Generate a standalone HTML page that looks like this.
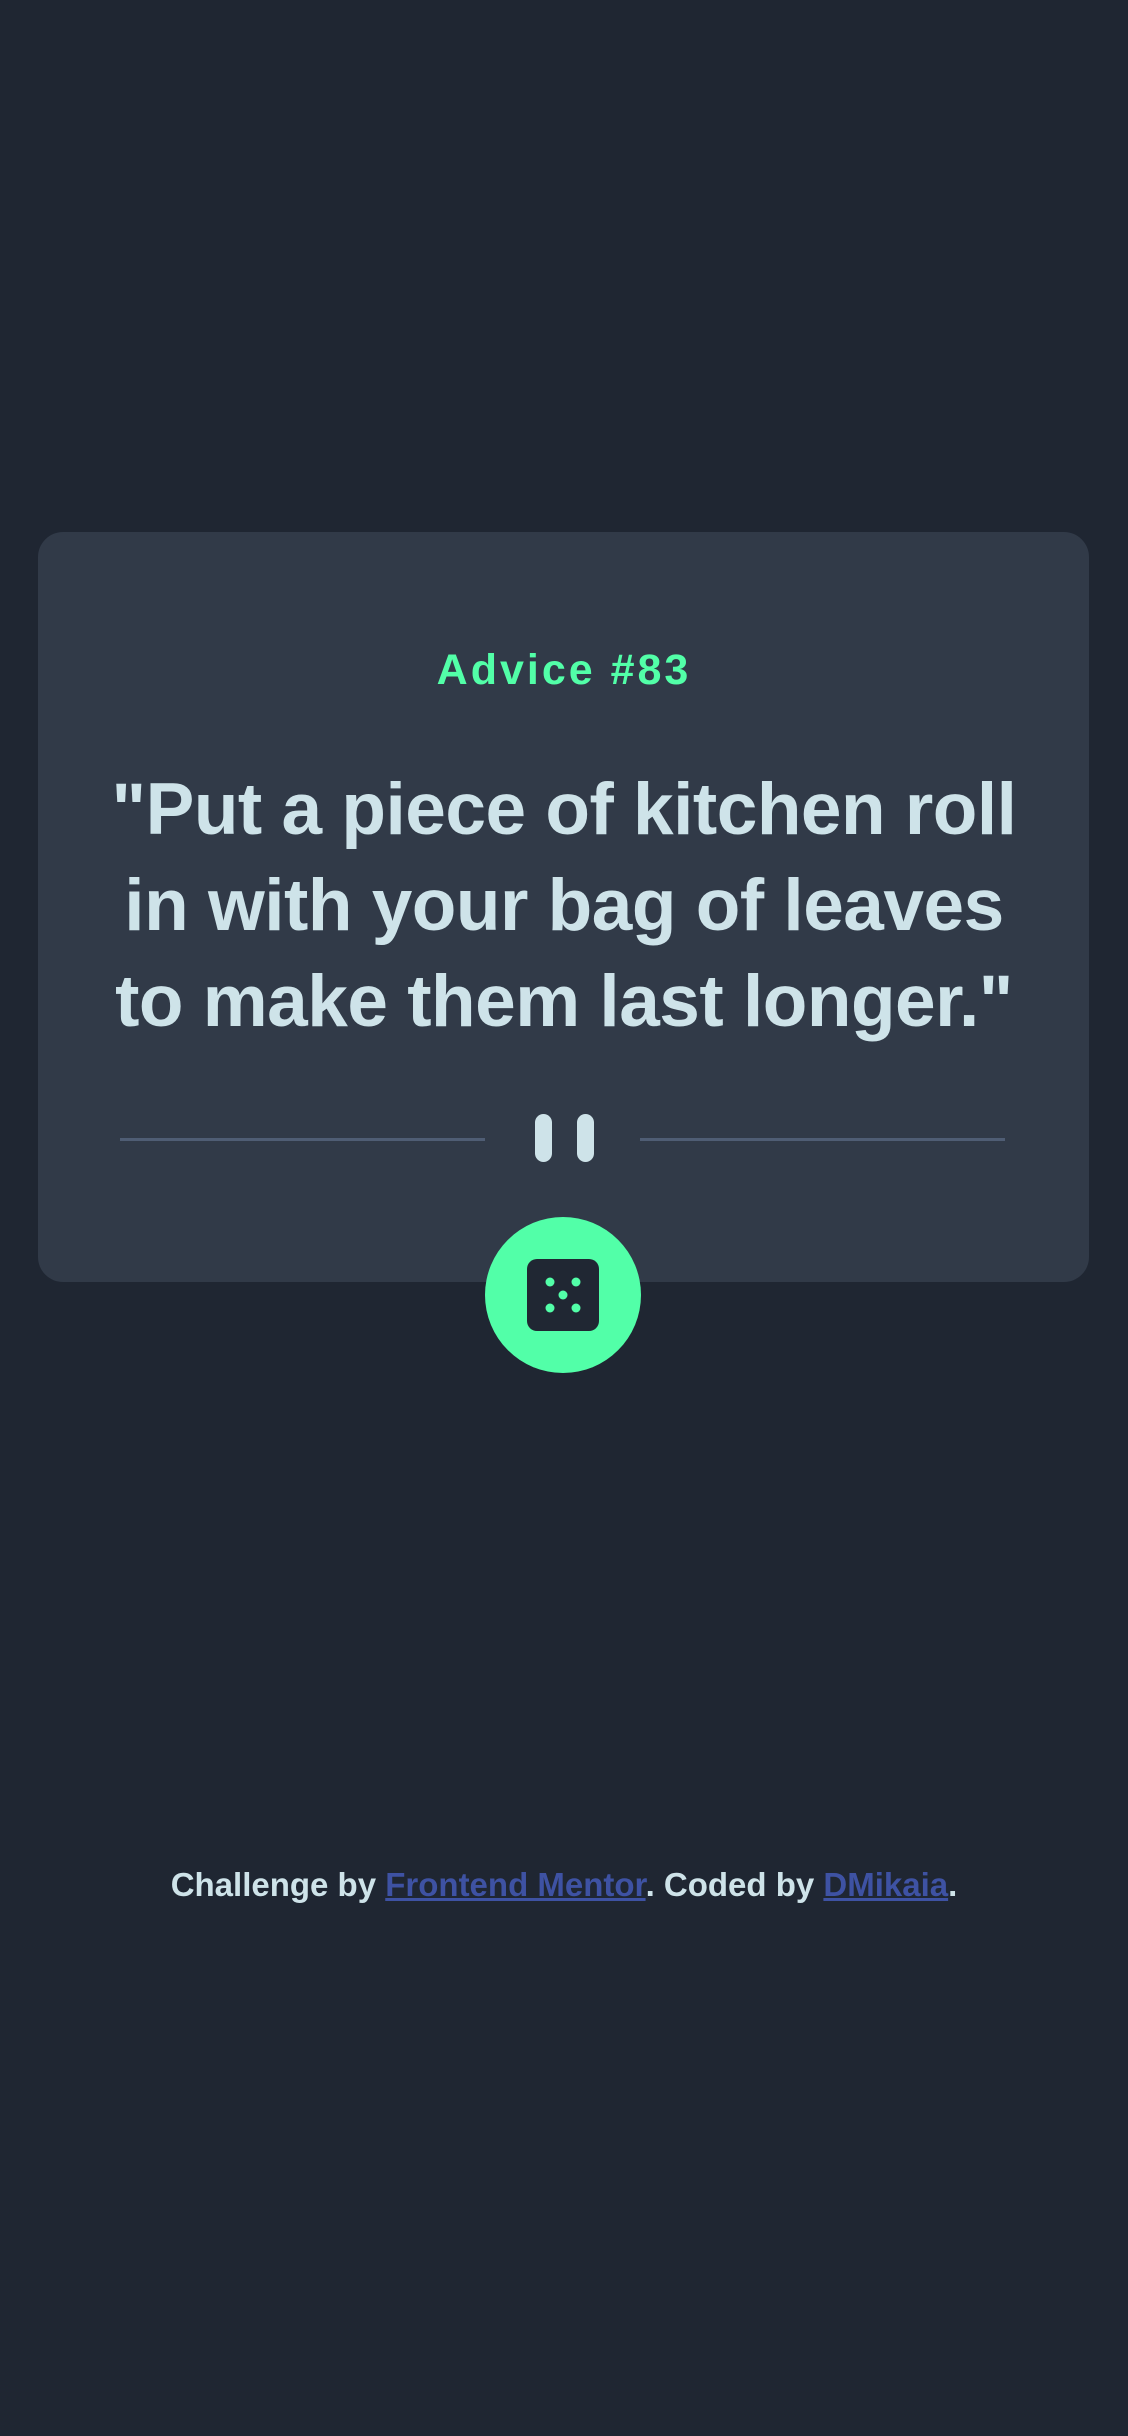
<!DOCTYPE html>
<html><head><meta charset="utf-8"><style>
html,body{margin:0;padding:0;background:#1f2632;width:1128px;height:2436px;overflow:hidden;font-family:"Liberation Sans",sans-serif;}
.card{position:absolute;left:38px;top:532px;width:1051px;height:750px;background:#313a48;border-radius:25px;}
.adv{position:absolute;left:0;width:1128px;top:646px;text-align:center;color:#52ffa8;font-weight:bold;font-size:43px;letter-spacing:3px;}
.q{position:absolute;left:0;width:1128px;top:762px;text-align:center;color:#cee3e9;font-weight:bold;font-size:73px;line-height:96px;letter-spacing:-0.5px;white-space:nowrap;}
.ln{position:absolute;top:1138px;height:3px;background:#4f5d74;width:365px;}
.bar{position:absolute;top:1114px;width:17px;height:48px;border-radius:9px;background:#cee3e9;}
.btn{position:absolute;left:485px;top:1217px;width:156px;height:156px;border-radius:50%;background:#52ffa8;}
.foot{position:absolute;left:0;width:1128px;top:1866px;text-align:center;color:#cee3e9;font-weight:bold;font-size:33px;}
.foot a{color:#3e52a3;text-decoration:underline;}
</style></head><body>
<div class="card"></div>
<div class="adv">Advice #83</div>
<div class="q">"Put a piece of kitchen roll<br>in with your bag of leaves<br>to make them last longer."</div>
<div class="ln" style="left:120px"></div>
<div class="ln" style="left:640px"></div>
<div class="bar" style="left:535px"></div>
<div class="bar" style="left:577px"></div>
<div class="btn"><svg width="156" height="156" viewBox="0 0 156 156"><rect x="42" y="42" width="72" height="72" rx="10" fill="#202733"/><circle cx="65" cy="65" r="4.5" fill="#52ffa8"/><circle cx="91" cy="65" r="4.5" fill="#52ffa8"/><circle cx="78" cy="78" r="4.5" fill="#52ffa8"/><circle cx="65" cy="91" r="4.5" fill="#52ffa8"/><circle cx="91" cy="91" r="4.5" fill="#52ffa8"/></svg></div>
<div class="foot">Challenge by <a>Frontend Mentor</a>. Coded by <a>DMikaia</a>.</div>
</body></html>
